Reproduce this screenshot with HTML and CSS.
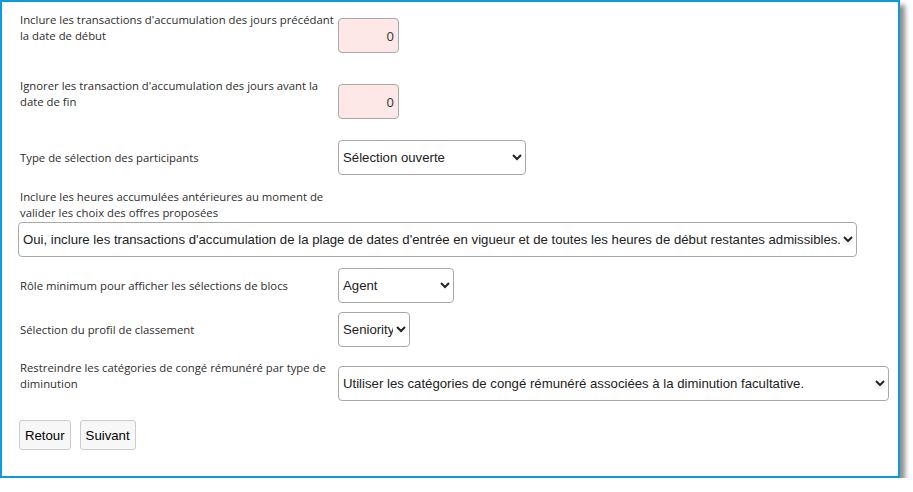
FILE: index.html
```html
<!DOCTYPE html>
<html lang="fr">
<head>
<meta charset="utf-8">
<title>Paramètres</title>
<link rel="stylesheet" href="styles.css">
</head>
<body>
<div class="frame">
  <form class="form">
    <div class="row">
      <label class="lbl two">Inclure les transactions d'accumulation des jours précédant la date de début</label>
      <input class="num" type="text" value="0">
    </div>
    <div class="row mt19">
      <label class="lbl two">Ignorer les transaction d'accumulation des jours avant la date de fin</label>
      <input class="num" type="text" value="0">
    </div>
    <div class="row mt15">
      <label class="lbl">Type de sélection des participants</label>
      <select class="sel w188"><option>Sélection ouverte</option></select>
    </div>
    <div class="stack mt14">
      <label class="lbl">Inclure les heures accumulées antérieures au moment de valider les choix des offres proposées</label>
      <select class="sel wide"><option>Oui, inclure les transactions d'accumulation de la plage de dates d'entrée en vigueur et de toutes les heures de début restantes admissibles.</option></select>
    </div>
    <div class="row mt11">
      <label class="lbl">Rôle minimum pour afficher les sélections de blocs</label>
      <select class="sel w116"><option>Agent</option></select>
    </div>
    <div class="row mt9">
      <label class="lbl">Sélection du profil de classement</label>
      <select class="sel w71"><option>Seniority</option></select>
    </div>
    <div class="row mt13">
      <label class="lbl two">Restreindre les catégories de congé rémunéré par type de diminution</label>
      <select class="sel w551"><option>Utiliser les catégories de congé rémunéré associées à la diminution facultative.</option></select>
    </div>
    <div class="buttons mt13">
      <button type="button" class="btn">Retour</button>
      <button type="button" class="btn">Suivant</button>
    </div>
  </form>
</div>
</body>
</html>
```
FILE: styles.css
```css
html, body {
  margin: 0;
  padding: 0;
  background: #ffffff;
}
.frame {
  box-sizing: border-box;
  width: 900px;
  height: 478px;
  border: 2px solid #0d9bdb;
  background: #ffffff;
  box-shadow: 5px 5px 5px rgba(0, 0, 0, 0.45);
}
.form {
  padding: 10px 0 0 16px;
  display: flex;
  flex-direction: column;
}
.row {
  display: flex;
  align-items: center;
}
.stack {
  display: flex;
  flex-direction: column;
  align-items: flex-start;
}
.lbl {
  box-sizing: border-box;
  width: 320px;
  padding-left: 2px;
  font-family: "Open Sans", "Noto Sans", sans-serif;
  font-size: 11.33px;
  line-height: 16px;
  color: #2e2e2e;
}
.row .lbl {
  flex: 0 0 320px;
}
.lbl.two {
  padding-bottom: 15px;
}
.num {
  box-sizing: border-box;
  width: 61px;
  height: 35px;
  border: 1px solid #a9a9a9;
  border-radius: 4px;
  background: #fde8e7;
  text-align: right;
  padding: 0 4px;
  font-family: "Open Sans", "Noto Sans", sans-serif;
  font-size: 13px;
  color: #333333;
}
.sel {
  box-sizing: border-box;
  height: 35px;
  border: 1px solid #a9a9a9;
  border-radius: 4px;
  background-color: #ffffff;
  font-family: "Liberation Sans", Arial, sans-serif;
  font-size: 13.2px;
  color: #222222;
  padding: 0;
  margin: 0;
}
.w188 { width: 188px; }
.w116 { width: 116px; }
.w71 { width: 72px; }
.w551 { width: 551px; }
.wide {
  width: 839px;
  margin-top: 1px;
}
.buttons {
  display: flex;
  gap: 9px;
  padding-left: 1px;
}
.btn {
  box-sizing: border-box;
  height: 30px;
  padding: 0 5px;
  border: 1px solid #cccccc;
  border-radius: 3px;
  background: #f7f7f7;
  font-family: "Liberation Sans", Arial, sans-serif;
  font-size: 13.2px;
  color: #000000;
}
.mt9 { margin-top: 9px; }
.mt11 { margin-top: 11px; }
.mt13 { margin-top: 13px; }
.mt14 { margin-top: 14px; }
.mt15 { margin-top: 15px; }
.mt19 { margin-top: 19px; }
```
